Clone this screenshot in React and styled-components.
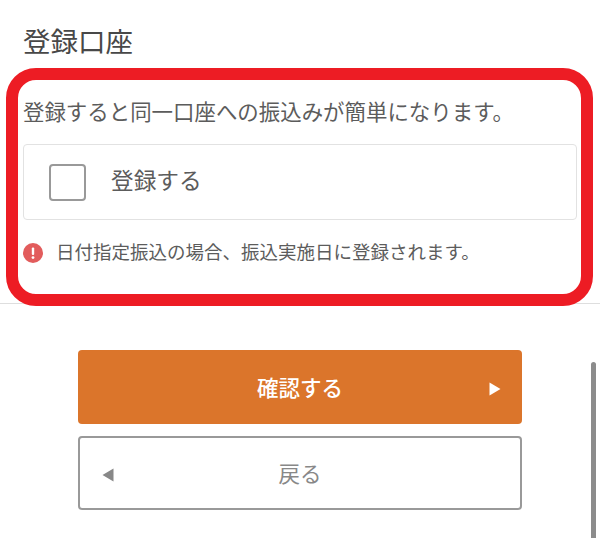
import React from "react";
import styled, { createGlobalStyle } from "styled-components";

const Global = createGlobalStyle`
  html, body {
    margin: 0;
    padding: 0;
    background: #fff;
  }
  body {
    font-family: "Noto Sans CJK JP", "Noto Sans", sans-serif;
  }
`;

const Root = styled.div`
  position: relative;
  width: 600px;
  height: 538px;
  overflow: hidden;
  background: #fff;
`;
const Section = styled.section`
  position: relative;
  height: 304px;
  padding: 22px 23px 0;
  box-sizing: border-box;
  border-bottom: 1px solid #dedede;
`;
const Title = styled.h2`
  margin: 0;
  height: 36px;
  font-size: 27.5px;
  line-height: 36px;
  font-weight: 400;
  color: #484848;
`;
const Lead = styled.p`
  margin: 37px 0 0;
  height: 32px;
  font-size: 21.45px;
  line-height: 32px;
  color: #5c5c5c;
  white-space: nowrap;
`;
const CheckCard = styled.label`
  display: flex;
  align-items: center;
  gap: 25px;
  height: 76px;
  margin-top: 17px;
  padding-left: 25px;
  box-sizing: border-box;
  border: 1.5px solid #e2e2e2;
  border-radius: 4px;
`;
const CheckBox = styled.span`
  width: 37px;
  height: 37px;
  box-sizing: border-box;
  border: 2px solid #999;
  border-radius: 4px;
`;
const CheckLabel = styled.span`
  padding-bottom: 5px;
  font-size: 22.7px;
  color: #5c5c5c;
`;
const Note = styled.div`
  display: flex;
  align-items: center;
  gap: 13px;
  margin-top: 20px;
  font-size: 18.5px;
  line-height: 22px;
  color: #5c5c5c;
  white-space: nowrap;
`;
const NoteText = styled.span`
  padding-bottom: 3px;
`;
const Highlight = styled.div`
  position: absolute;
  left: 6px;
  top: 68px;
  width: 587px;
  height: 238px;
  box-sizing: border-box;
  border: 12px solid #ed1c24;
  border-radius: 30px;
  pointer-events: none;
`;
const Actions = styled.div`
  display: flex;
  flex-direction: column;
  gap: 12px;
  width: 444px;
  margin: 46px 0 0 78px;
`;
const Button = styled.button`
  position: relative;
  display: flex;
  align-items: center;
  justify-content: center;
  height: 74px;
  padding: 0 0 2px;
  box-sizing: border-box;
  border-radius: 4px;
  font-family: inherit;
  font-size: 21.5px;
  border: ${p => (p.$primary ? "none" : "2px solid #999")};
  background: ${p => (p.$primary ? "#db752b" : "#fff")};
  color: ${p => (p.$primary ? "#fff" : "#888")};
  font-weight: ${p => (p.$primary ? 500 : 400)};
`;
const Arrow = styled.svg`
  position: absolute;
  top: calc(50% + 2px);
  width: 12px;
  height: 14px;
  transform: translateY(-50%);
  ${p => (p.$left ? "left: 22px;" : "right: 21px;")}
`;
const ScrollBar = styled.div`
  position: absolute;
  left: 591px;
  top: 362px;
  bottom: 0;
  width: 5px;
  border-radius: 3px 3px 0 0;
  background: #8c8c8c;
`;

const AlertIcon = () => (
  <svg width="20" height="20" viewBox="0 0 20 20">
    <circle cx="10" cy="10" r="10" fill="#e25c5c" />
    <rect x="8.8" y="4.5" width="2.4" height="7.5" rx="1" fill="#fff" />
    <circle cx="10" cy="14.6" r="1.4" fill="#fff" />
  </svg>
);

const App = () => {
  return (
    <Root>
      <Global />
      <Section>
        <Title>登録口座</Title>
        <Lead>登録すると同一口座への振込みが簡単になります。</Lead>
        <CheckCard>
          <CheckBox />
          <CheckLabel>登録する</CheckLabel>
        </CheckCard>
        <Note>
          <AlertIcon />
          <NoteText>日付指定振込の場合、振込実施日に登録されます。</NoteText>
        </Note>
        <Highlight />
      </Section>
      <Actions>
        <Button $primary>
          確認する
          <Arrow viewBox="0 0 12 14">
            <path d="M0.5 0.5 L11.5 7 L0.5 13.5 Z" fill="#fff" />
          </Arrow>
        </Button>
        <Button>
          戻る
          <Arrow $left viewBox="0 0 12 14">
            <path d="M11.5 0.5 L0.5 7 L11.5 13.5 Z" fill="#888" />
          </Arrow>
        </Button>
      </Actions>
      <ScrollBar />
    </Root>
  );
};

export default App;
